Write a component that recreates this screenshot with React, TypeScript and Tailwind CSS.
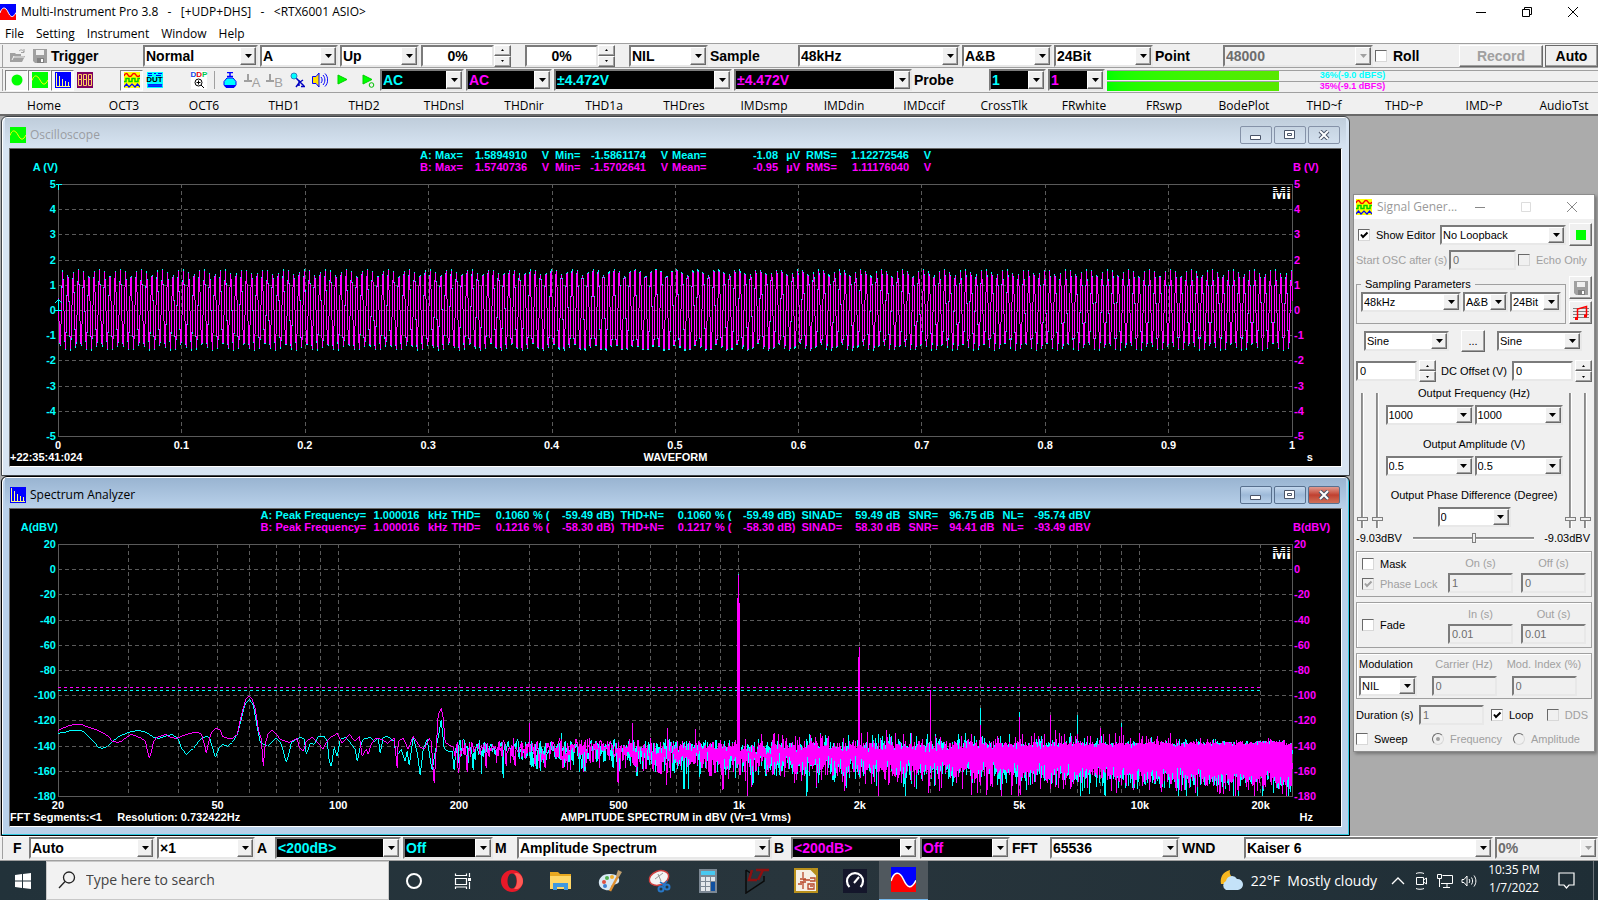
import type { ReactNode } from "react"
import clsx from "clsx"

const sans = "font-['Liberation_Sans',Arial,sans-serif]"
const segoe = "font-['Open_Sans','Noto_Sans',sans-serif]"
const raised =
  "border border-t-white border-l-white border-r-[#696969] border-b-[#696969] bg-[#f0f0f0] shadow-[inset_-1px_-1px_0_#a0a0a0]"
const sunken = "border-2 border-t-[#7b7b7b] border-l-[#7b7b7b] border-r-[#e8e8e8] border-b-[#e8e8e8]"

type Tone = "plain" | "cyan" | "magenta" | "disabled"

const toneClass: Record<Tone, string> = {
  plain: "bg-white text-black",
  cyan: "bg-black text-[#00ffff]",
  magenta: "bg-black text-[#ff00ff]",
  disabled: "bg-[#f0f0f0] text-[#6d6d6d]",
}

/* ---------- controls ---------- */

function Combo({
  label,
  value,
  className,
  tone = "plain",
  small = false,
}: {
  label: string
  value: string
  className?: string
  tone?: Tone
  small?: boolean
}) {
  return (
    <div className={clsx("flex", small ? "h-5" : "h-[22px]", sunken, toneClass[tone], className)}>
      <select
        aria-label={label}
        disabled={tone === "disabled"}
        className={clsx(
          "min-w-0 flex-1 appearance-none bg-transparent pl-px opacity-100 outline-none",
          small ? "text-[11px] leading-4" : "text-sm leading-[18px] font-bold"
        )}
      >
        <option>{value}</option>
      </select>
      <span className={clsx("pointer-events-none flex w-4 shrink-0 items-center justify-center", raised)}>
        <svg width="7" height="4" viewBox="0 0 7 4">
          <path d="M0 0H7L3.5 4Z" fill={tone === "disabled" ? "#a0a0a0" : "#000"} />
        </svg>
      </span>
    </div>
  )
}

function Spinner({ label }: { label: string }) {
  return (
    <div className="flex w-[17px] shrink-0 flex-col">
      <button aria-label={`${label} up`} className={clsx("flex h-[11px] items-center justify-center", raised)}>
        <svg width="3" height="2"><path d="M0 2H3L1.5 0Z" /></svg>
      </button>
      <button aria-label={`${label} down`} className={clsx("flex h-[11px] items-center justify-center", raised)}>
        <svg width="3" height="2"><path d="M0 0H3L1.5 2Z" /></svg>
      </button>
    </div>
  )
}

function Field({ label, value, disabled = false, className }: { label: string; value: string; disabled?: boolean; className?: string }) {
  return (
    <input
      aria-label={label}
      defaultValue={value}
      disabled={disabled}
      className={clsx(
        "h-5 min-w-0 pl-0.5 text-[11px] leading-4 outline-none",
        sunken,
        disabled ? "bg-[#f0f0f0] text-[#6d6d6d]" : "bg-white text-black",
        className
      )}
    />
  )
}

function Check({
  label,
  checked = false,
  disabled = false,
  type = "checkbox",
  className,
}: {
  label: string
  checked?: boolean
  disabled?: boolean
  type?: "checkbox" | "radio"
  className?: string
}) {
  return (
    <label className={clsx("flex items-center gap-1.5 whitespace-nowrap", disabled && "text-[#a0a0a0]", className)}>
      <span className="relative flex h-3 w-3 shrink-0">
        <input
          type={type}
          defaultChecked={checked}
          disabled={disabled}
          className={clsx(
            "h-3 w-3 appearance-none border border-t-[#696969] border-l-[#696969] border-r-[#d8d8d8] border-b-[#d8d8d8]",
            type === "radio" && "rounded-full",
            disabled ? "bg-[#f0f0f0]" : "bg-white"
          )}
        />
        {checked && (
          <svg className="pointer-events-none absolute inset-0" viewBox="0 0 12 12">
            {type === "radio" ? (
              <circle cx="6" cy="6" r="2" fill="#a0a0a0" />
            ) : (
              <path d="M3 5.5L5 8L9.5 3.5" fill="none" stroke={disabled ? "#a0a0a0" : "#000"} strokeWidth="2" />
            )}
          </svg>
        )}
      </span>
      {label}
    </label>
  )
}

/* ---------- 16px icons ---------- */

function Svg({ children, size = 16, className }: { children: ReactNode; size?: number; className?: string }) {
  return (
    <svg width={size} height={size} viewBox="0 0 16 16" className={clsx("shrink-0", className)} fill="none">
      {children}
    </svg>
  )
}

const AppIcon = ({ size = 16 }: { size?: number }) => (
  <Svg size={size}>
    <path d="M0 0H16V16H0Z" fill="#0000ff" />
    <path d="M0 9C2 2.500 5.500 2.500 8 8S13 14.500 16 8.500V16H0Z" fill="#ff0000" />
    <path d="M0 9C2 2.500 5.500 2.500 8 8S13 14.500 16 8.500" stroke="#fff" />
  </Svg>
)

const ScopeIcon = () => (
  <Svg>
    <path d="M0 0H16V16H0Z" fill="#00ff00" />
    <path d="M0 8.500C2 2.500 5 2.500 8 8S13 13.500 16 8" stroke="#ffff00" />
  </Svg>
)

const SpectrumIcon = () => (
  <Svg>
    <path d="M0 0H16V16H0Z" fill="#0000ff" />
    <path d="M1.500 1V14M4.500 4V14M7.500 7V14M10.500 9V14M13.500 10V14M1 14.500H15" stroke="#ffff80" />
  </Svg>
)

const DmmIcon = () => (
  <Svg>
    <path d="M0 0H16V16H0Z" fill="#800060" />
    <path
      d="M1.500 2.500H4.500V7.500H1.500ZM6.500 2.500H9.500V7.500H6.500ZM11.500 2.500H14.500V7.500H11.500ZM1.500 7.500H4.500V13.500H1.500ZM6.500 7.500H9.500V13.500H6.500ZM11.500 7.500H14.500V13.500H11.500Z"
      stroke="#ffd060"
    />
  </Svg>
)

const GeneratorIcon = () => (
  <Svg>
    <path d="M0 0H16V16H0Z" fill="#ffff00" />
    <path d="M0 4C1 1 3 1 4 3S7 5 8 3S11 1 12 3S15 5 16 3" stroke="#ff0000" strokeWidth="1.500" />
    <path d="M0 9.500H2V6.500H5V9.500H8V6.500H11V9.500H14V6.500H16" stroke="#00d000" strokeWidth="1.500" />
    <path d="M0 15L2.500 12L5 15L8 12L11 15L13.500 12L16 15" stroke="#0000ff" strokeWidth="1.200" />
  </Svg>
)

const DutIcon = () => (
  <span className="relative flex h-4 w-4 items-center justify-center bg-[#00ffff]">
    <svg className="absolute inset-0" width="16" height="16" fill="none" stroke="#0000ff">
      <path d="M1 1.500H5M7 1.500H9M11 1.500H15M1 3.500H5M9 3.500H14M1 12L3 15L5 12L7 15L9 12L11 15L13 12L15 15M1 15L3 12L5 15L7 12L9 15L11 12L13 15L15 12" />
    </svg>
    <span className="relative text-[8px] leading-none font-bold text-black">DUT</span>
  </span>
)

const DdpIcon = () => (
  <span className="flex h-[18px] w-4 flex-col items-center bg-white">
    <span className="text-[8px] leading-[7px] font-bold">
      <span className="text-blue-700">D</span>
      <span className="text-red-600">D</span>
      <span className="text-green-500">P</span>
    </span>
    <svg width="10" height="10" fill="none" stroke="#000">
      <circle cx="4.500" cy="4.500" r="3.500" />
      <path d="M2.500 4.500H6.500M4.500 2.500V6.500M7 7L10 10" />
    </svg>
  </span>
)

const FlaskIcon = () => (
  <Svg>
    <path d="M5 .5H11M8 1V4M5 4.500H11" stroke="#0000ff" strokeWidth="1.500" />
    <path d="M5 6H11L14 9.500V13L12 15.500H4L2 13V9.500Z" fill="#00ffff" stroke="#0000ff" />
    <path d="M3 14H13" stroke="#0000ff" strokeWidth="2" />
  </Svg>
)

const GroundIcon = ({ ch }: { ch: string }) => (
  <span className="flex items-center text-[#a0a0a0]">
    <svg width="8" height="12" stroke="currentColor" strokeWidth="2">
      <path d="M4 0V7M0 7H8" />
    </svg>
    <span className="pt-1 text-[13px] leading-none">{ch}</span>
  </span>
)

const MicIcon = () => (
  <Svg>
    <path d="M6 6L14 14M9 8V14M9 11L6 15M10 10L13 8" stroke="#0000c0" strokeWidth="1.500" />
    <circle cx="4" cy="4" r="3" fill="#00ffff" stroke="#3080c0" />
    <path d="M11 14.500H15" stroke="#0000c0" strokeWidth="1.500" />
  </Svg>
)

const SpeakerIcon = () => (
  <Svg>
    <path d="M.5 4.500H4L7 1V15L4 11.500H.5Z" fill="#ffe000" stroke="#0000ff" />
    <path d="M9 5C10.500 7 10.500 9 9 11M11 3C13.500 6 13.500 10 11 13M13 1.500C16.500 5 16.500 11 13 14.500" stroke="#0000ff" />
  </Svg>
)

const PlayIcon = ({ loop = false }: { loop?: boolean }) => (
  <Svg>
    <path d="M3 3L12 7.500L3 12Z" fill="#00ff00" stroke="#00d000" />
    {loop && <circle cx="11.500" cy="13" r="2.300" stroke="#00c000" />}
  </Svg>
)

const OpenIcon = () => (
  <Svg>
    <path d="M0 14V5H5L6 6H11V8H15L12 14Z" fill="#a0a0a0" />
    <path d="M3 9H14M2 12L4 8" stroke="#f0f0f0" />
    <path d="M9 3C11 1 13 2 14 4M14 1V4.500H11" stroke="#a0a0a0" />
  </Svg>
)

const SaveIcon = () => (
  <Svg>
    <path d="M1 1H15V15H3L1 13Z" fill="#a0a0a0" />
    <path d="M4 2H12V7H4Z" fill="#f0f0f0" />
    <path d="M5 10H12V15H5Z" fill="#808080" />
    <path d="M9 11H11V14H9Z" fill="#fff" />
  </Svg>
)

const MusicIcon = () => (
  <Svg>
    <path d="M0 3.500H16M0 6.500H16M0 9.500H16M0 12.500H16" stroke="#808080" />
    <path d="M4.500 13V4L13.500 1.500V11" stroke="#ff0000" strokeWidth="1.500" />
    <path d="M2 12H5V15H2ZM11 9.500H14V12.500H11Z" fill="#ff0000" />
  </Svg>
)

/* ---------- top bars ---------- */

function ToolLabel({ children, className }: { children: ReactNode; className?: string }) {
  return <span className={clsx("shrink-0 text-sm leading-5 font-bold whitespace-nowrap", className)}>{children}</span>
}

function ToolButton({ label, children, pressed = false, className }: { label: string; children: ReactNode; pressed?: boolean; className?: string }) {
  return (
    <button
      aria-label={label}
      className={clsx(
        "flex h-[21px] shrink-0 items-center justify-center",
        pressed && "border border-t-[#808080] border-l-[#808080] border-r-white border-b-white bg-[#f8f8f8]",
        className
      )}
    >
      {children}
    </button>
  )
}

const barClass = "flex items-center border-b border-[#a0a0a0] bg-[#f0f0f0]"
const Grip = () => <span className="mr-0.5 ml-0.5 h-[22px] w-px shrink-0 bg-[#a0a0a0]" />

function TitleBar() {
  return (
    <header className={clsx("bg-white text-xs", segoe)}>
      <div className="flex h-6 items-center">
        <AppIcon />
        <h1 className="ml-[5px] whitespace-pre">{"Multi-Instrument Pro 3.8   -   [+UDP+DHS]   -   <RTX6001 ASIO>"}</h1>
        <div className="mr-5 ml-auto flex gap-9">
          <button aria-label="Minimize"><svg width="10" height="10" stroke="#000"><path d="M0 5.500H10" /></svg></button>
          <button aria-label="Restore">
            <svg width="10" height="10" stroke="#000" fill="none"><path d="M.5 2.500H7.500V9.500H.5ZM2.500 2V.5H9.500V7.500H8" /></svg>
          </button>
          <button aria-label="Close"><svg width="10" height="10" stroke="#000"><path d="M0 0L10 10M10 0L0 10" /></svg></button>
        </div>
      </div>
      <nav className="flex h-[19px] items-center gap-3 pl-[5px] leading-4">
        {["File", "Setting", "Instrument", "Window", "Help"].map((item) => (
          <button key={item}>{item}</button>
        ))}
      </nav>
    </header>
  )
}

function TriggerBar() {
  return (
    <div className={clsx(barClass, "h-[25px] gap-0.5 border-t border-t-[#a0a0a0]")}>
      <Grip />
      <ToolButton label="Open" className="w-[22px]"><OpenIcon /></ToolButton>
      <ToolButton label="Save" className="w-[18px]"><SaveIcon /></ToolButton>
      <ToolLabel className="w-[90px]">Trigger</ToolLabel>
      <Combo label="Trigger mode" value="Normal" className="w-[115px]" />
      <Combo label="Trigger source" value="A" className="w-[78px]" />
      <Combo label="Trigger edge" value="Up" className="w-[79px]" />
      <div className="flex w-[90px]">
        <input aria-label="Trigger level" defaultValue="0%" className={clsx("h-[22px] min-w-0 flex-1 bg-white text-center text-sm font-bold", sunken)} />
        <Spinner label="Trigger level" />
      </div>
      <div className="ml-3 flex w-[90px]">
        <input aria-label="Trigger delay" defaultValue="0%" className={clsx("h-[22px] min-w-0 flex-1 bg-white text-center text-sm font-bold", sunken)} />
        <Spinner label="Trigger delay" />
      </div>
      <Combo label="Noise rejection" value="NIL" className="ml-3 w-[79px]" />
      <ToolLabel className="w-[86px]">Sample</ToolLabel>
      <Combo label="Sampling rate" value="48kHz" className="min-w-20 flex-1" />
      <Combo label="Channels" value="A&amp;B" className="w-[90px]" />
      <Combo label="Bit resolution" value="24Bit" className="w-[99px]" />
      <ToolLabel className="w-[66px]">Point</ToolLabel>
      <Combo label="Record length" value="48000" tone="disabled" className="w-[150px]" />
      <Check label="Roll" className="w-[82px] text-sm leading-5 font-bold" />
      <button disabled className={clsx("h-[22px] w-[84px] text-sm font-bold text-[#a0a0a0]", raised)}>Record</button>
      <button className={clsx("h-[22px] w-[53px] text-sm font-bold outline -outline-offset-1 outline-[#696969]", raised)}>Auto</button>
    </div>
  )
}

function LevelMeter({ label, text, value, className }: { label: string; text: string; value: number; className: string }) {
  return (
    <div
      role="meter"
      aria-label={label}
      aria-valuenow={value}
      className="relative flex h-[10px] items-center justify-center border-t border-[#a0a0a0]"
    >
      <div className="absolute inset-y-0 left-0 bg-linear-to-r from-[#00ff00] to-[#58e800]" style={{ width: `${value}%` }} />
      <span className={clsx("relative text-[9px] leading-[9px] font-bold", className)}>{text}</span>
    </div>
  )
}

function InstrumentBar() {
  return (
    <div className={clsx(barClass, "h-[25px]")}>
      <Grip />
      <ToolButton label="Run" pressed className="w-[23px]">
        <svg width="12" height="12"><circle cx="6" cy="6" r="5.500" fill="#00ff00" /></svg>
      </ToolButton>
      <ToolButton label="Oscilloscope" pressed className="w-[23px]"><ScopeIcon /></ToolButton>
      <ToolButton label="Spectrum analyzer" pressed className="w-[23px]"><SpectrumIcon /></ToolButton>
      <ToolButton label="Multimeter" className="w-[22px]"><DmmIcon /></ToolButton>
      <ToolButton label="Signal generator" pressed className="ml-6 w-[23px]"><GeneratorIcon /></ToolButton>
      <ToolButton label="Device test plan" className="w-[23px]"><DutIcon /></ToolButton>
      <ToolButton label="Derived data points" className="ml-[22px] w-[22px]"><DdpIcon /></ToolButton>
      <span className="mx-1 h-[18px] w-px bg-[#a0a0a0]" />
      <ToolButton label="Calibration" className="w-[22px]"><FlaskIcon /></ToolButton>
      <ToolButton label="Zero A" className="w-[22px]"><GroundIcon ch="A" /></ToolButton>
      <ToolButton label="Zero B" className="w-[23px]"><GroundIcon ch="B" /></ToolButton>
      <ToolButton label="Input device" className="w-[23px]"><MicIcon /></ToolButton>
      <ToolButton label="Output device" className="w-[22px]"><SpeakerIcon /></ToolButton>
      <ToolButton label="Play" className="w-6"><PlayIcon /></ToolButton>
      <ToolButton label="Play in loop" className="w-[25px]"><PlayIcon loop /></ToolButton>
      <div className="flex min-w-0 flex-1 items-center gap-0.5">
        <Combo label="Coupling A" value="AC" tone="cyan" className="w-[84px]" />
        <Combo label="Coupling B" value="AC" tone="magenta" className="w-[86px]" />
        <Combo label="Range A" value="±4.472V" tone="cyan" className="w-[178px]" />
        <Combo label="Range B" value="±4.472V" tone="magenta" className="w-[178px]" />
        <ToolLabel className="w-[73px]">Probe</ToolLabel>
        <Combo label="Probe A" value="1" tone="cyan" className="w-[57px]" />
        <Combo label="Probe B" value="1" tone="magenta" className="w-[57px]" />
        <div className="flex min-w-0 flex-1 flex-col gap-px">
          <LevelMeter label="Level A" text="36%(-9.0 dBFS)" value={35} className="text-[#00ffff]" />
          <LevelMeter label="Level B" text="35%(-9.1 dBFS)" value={35} className="text-[#ff00ff]" />
        </div>
      </div>
    </div>
  )
}

const hotKeys = [
  "Home", "OCT3", "OCT6", "THD1", "THD2", "THDnsl", "THDnir", "THD1a", "THDres", "IMDsmp",
  "IMDdin", "IMDccif", "CrossTlk", "FRwhite", "FRswp", "BodePlot", "THD~f", "THD~P", "IMD~P", "AudioTst",
]

function HotPanelBar() {
  return (
    <div className={clsx("flex h-[23px] overflow-hidden border-b-2 border-[#696969] bg-[#f0f0f0] pt-[5px] pl-1 text-xs", segoe)}>
      {hotKeys.map((key) => (
        <button key={key} className="w-20 shrink-0">{key}</button>
      ))}
    </div>
  )
}

/* ---------- charts ---------- */

const X0 = 48
const X1 = 1283
const Y0 = 11
const Y1 = 263
const CYAN = "#00ffff"
const MAGENTA = "#ff00ff"

function scopePath(amplitude: number) {
  let d = ""
  for (let x = 0; x <= X1 - X0; x++) {
    const v = amplitude * Math.cos((2 * Math.PI * (x - 4.2)) / 5.255)
    const y = Math.round(137 - v * 25.2)
    d += `${x ? "L" : "M"}${X0 + x + 0.5} ${y + 0.5}`
  }
  return d
}

const freqX = (f: number) => X0 + Math.log10(f / 20) * 401.2
const dbY = (db: number) => Y0 + ((20 - db) / 200) * (Y1 - Y0)

// low frequency part of both traces: x from the left axis, then level in dBV
const lowA = [
  0, -130, 6, -129, 13, -128, 23, -128, 28, -131, 35, -136, 40, -141, 44, -142, 49, -140, 54, -136, 61, -132, 70, -129, 80, -128,
  88, -129, 95, -133, 101, -134, 106, -132, 114, -131, 120, -135, 123, -142, 128, -147, 135, -142, 142, -135, 148, -132, 151, -133,
  154, -141, 157, -149, 161, -141, 164, -139, 169, -140, 174, -137, 179, -131, 183, -118, 187, -106, 191, -103, 195, -108, 198, -121,
  202, -137, 209, -140, 214, -136, 218, -134, 222, -137, 225, -144, 228, -153, 231, -145, 233, -137, 242, -133, 246, -135, 248, -147,
  252, -138, 256, -139, 260, -132, 266, -132, 269, -136, 271, -152, 273, -156, 276, -141, 279, -148, 282, -135, 287, -133, 291, -136,
  297, -143, 299, -152, 302, -140, 305, -135, 312, -133, 316, -136, 320, -134, 322, -146, 325, -133, 329, -132, 336, -136, 338, -149,
  343, -143, 347, -152, 349, -144, 351, -155, 355, -133, 359, -145, 362, -163, 365, -143, 369, -135, 372, -151, 374, -159, 377, -144,
  380, -133, 383, -120, 386, -142, 390, -144, 394, -144, 396, -159, 398, -140,
]
const lowB = [
  0, -128, 4, -126, 11, -124, 18, -123, 23, -123, 30, -125, 37, -127, 45, -130, 50, -132, 54, -136, 59, -137, 63, -136, 68, -133,
  73, -131, 78, -132, 83, -134, 87, -136, 89, -144, 91, -150, 93, -144, 95, -137, 98, -133, 102, -132, 107, -131, 112, -133, 118, -134,
  123, -132, 131, -130, 140, -129, 143, -131, 146, -139, 148, -146, 150, -138, 153, -129, 156, -127, 159, -126, 162, -128, 164, -132,
  169, -134, 174, -134, 179, -131, 182, -119, 186, -107, 188, -102, 191, -101, 194, -103, 197, -111, 200, -127, 203, -135, 205, -156,
  207, -138, 210, -130, 214, -128, 218, -131, 222, -135, 228, -136, 231, -137, 239, -134, 241, -141, 245, -144, 248, -136, 254, -133,
  260, -138, 265, -143, 267, -139, 271, -134, 279, -130, 284, -138, 291, -131, 297, -136, 301, -132, 304, -148, 308, -143, 310, -147,
  313, -139, 317, -134, 324, -135, 329, -138, 336, -134, 339, -158, 340, -136, 345, -134, 350, -143, 355, -132, 362, -141, 366, -143,
  371, -134, 373, -136, 376, -170, 378, -143, 380, -116, 383, -110, 385, -118, 387, -137, 390, -139, 395, -141, 397, -149, 399, -137,
]

type Peak = [freq: number, db: number]

const peaksA: Peak[] = [[360, -130], [1000, -3.7], [2000, -63], [3000, -97], [4000, -110], [5000, -113], [6000, -122], [7000, -116], [8000, -128], [9000, -122]]
const peaksB: Peak[] = [
  [300, -122], [540, -122], [660, -126], [780, -127], [1000, -4.4], [1140, -131], [1260, -131], [1620, -132], [2000, -62], [2090, -129],
  [2340, -128], [2460, -130], [2580, -131], [2700, -130], [3000, -96], [3100, -132], [3800, -131], [4000, -124], [5000, -117], [5600, -132],
  [5800, -131], [6000, -116], [6180, -128], [6500, -131], [7000, -131], [7400, -132], [8000, -126], [8700, -130], [9000, -125], [10000, -130], [10400, -132],
]

function spectrumPath(low: number[], peaks: Peak[], seed: number) {
  let d = ""
  for (let i = 0; i < low.length; i += 2) {
    d += `${i ? "L" : "M"}${X0 + low[i] + 0.5} ${Math.round(dbY(low[i + 1])) + 0.5}`
  }
  let state = seed
  const random = () => {
    state = (Math.imul(state, 1664525) + 1013904223) >>> 0
    return (state + 1) / 4294967297
  }
  const gauss = () => Math.sqrt(-2 * Math.log(random())) * Math.cos(2 * Math.PI * random())
  // noise for every FFT bin, smeared over its neighbours by the window, folded into pixel columns
  const columns = new Map<number, number[]>()
  const re = [0, 0, 0, 0, 0]
  const im = [0, 0, 0, 0, 0]
  const window = [0.3, 0.75, 1, 0.75, 0.3]
  for (let f = 199; f < 23950; f += 0.732422) {
    re.shift()
    im.shift()
    re.push(gauss())
    im.push(gauss())
    const a = re.reduce((sum, v, i) => sum + v * window[i], 0)
    const b = im.reduce((sum, v, i) => sum + v * window[i], 0)
    const x = Math.floor(freqX(f))
    const floor = f < 500 ? -141.5 : f < 1000 ? -143 : f < 20000 ? -145 : f < 23000 ? -144 : -146
    const level = floor + 10 * Math.log10((a * a + b * b) / 4.6 + 1e-5)
    const column = columns.get(x)
    if (column) column.push(level)
    else columns.set(x, [level])
  }
  // small spurs standing out of the noise floor
  columns.forEach((levels, x) => {
    const inSpurs = x > freqX(1100) && x < freqX(12000)
    if (random() < (inSpurs ? 0.3 : 0.15)) levels.push(-138 + (inSpurs ? 8 : 4) * random() ** 2)
  })
  for (const [freq, db] of peaks) {
    const x = Math.floor(freqX(freq))
    columns.get(x)?.push(db)
    if (db > -90) {
      columns.get(x - 1)?.push(db > -50 ? -23 : db - 8)
      if (db > -50) columns.get(x + 1)?.push(-27)
    }
  }
  columns.forEach((levels, x) => {
    const top = Math.round(dbY(Math.max(...levels)))
    const bottom = Math.min(Y1, Math.round(dbY(Math.min(...levels))))
    const first = Math.min(Y1, Math.round(dbY(levels[0])))
    d += `L${x + 0.5} ${first + 0.5}V${bottom + 0.5}V${top + 0.5}V${first + 0.5}`
  })
  return d
}

const scopeA = scopePath(1.62)
const scopeB = scopePath(1.57)
const spectrumA = spectrumPath(lowA, peaksA, 7)
const spectrumB = spectrumPath(lowB, peaksB, 4242)

const voltTicks = [5, 4, 3, 2, 1, 0, -1, -2, -3, -4, -5]
const dbTicks = [20, 0, -20, -40, -60, -80, -100, -120, -140, -160, -180]
const timeTicks = ["0", "0.1", "0.2", "0.3", "0.4", "0.5", "0.6", "0.7", "0.8", "0.9", "1"]
const freqGrid = [
  30, 40, 50, 60, 70, 80, 90, 100, 200, 300, 400, 500, 600, 700, 800, 900, 1000,
  2000, 3000, 4000, 5000, 6000, 7000, 8000, 9000, 10000, 20000,
]
const freqTicks: [number, string][] = [
  [20, "20"], [50, "50"], [100, "100"], [200, "200"], [500, "500"], [1000, "1k"], [2000, "2k"], [5000, "5k"], [10000, "10k"], [20000, "20k"],
]

function Plot({
  label,
  yTicks,
  xGrid,
  xTicks,
  children,
}: {
  label: string
  yTicks: number[]
  xGrid: number[]
  xTicks: [number, string][]
  children: ReactNode
}) {
  const rowY = (i: number) => Math.round(Y0 + (i * (Y1 - Y0)) / 10)
  return (
    <svg role="img" aria-label={label} viewBox="0 0 1332 278" className="block h-auto w-full text-[11px] font-bold">
      <g fill="none" stroke="#5a5a5a" shapeRendering="crispEdges">
        {yTicks.slice(1, -1).map((t, i) => (
          <path key={t} d={`M${X0} ${rowY(i + 1) + 0.5}H${X1}`} strokeDasharray="4 3" />
        ))}
        {xGrid.map((x) => (
          <path key={x} d={`M${Math.floor(x) + 0.5} ${Y0}V${Y1}`} strokeDasharray="4 3" />
        ))}
        <path d={`M${X0 + 0.5} ${Y0 + 0.5}H${X1 + 0.5}V${Y1 + 0.5}H${X0 + 0.5}Z`} />
      </g>
      <g fill="none" shapeRendering="crispEdges">{children}</g>
      {yTicks.map((t, i) => (
        <g key={t}>
          <text x={X0 - 2} y={rowY(i) + 4} textAnchor="end" fill={CYAN}>{t}</text>
          <text x={X1 + 2} y={rowY(i) + 4} fill={MAGENTA}>{t}</text>
        </g>
      ))}
      {xTicks.map(([x, text]) => (
        <text key={text} x={x} y={276} textAnchor="middle" fill="#fff">{text}</text>
      ))}
      <text x={1263} y={26} fill="#fff" className="text-[17px]">MI</text>
      <path d="M1262 15.500H1283M1262 17.500H1283M1262 19.500H1283" stroke="#000" />
    </svg>
  )
}

type Cell = [text: string, width: string, right?: boolean]

function Readout({ cells, className }: { cells: Cell[]; className: string }) {
  return (
    <div className={clsx("flex h-3 items-center whitespace-nowrap", className)}>
      {cells.map(([text, width, right], i) => (
        <span key={i} className={clsx("shrink-0", width, right && "text-right")}>{text}</span>
      ))}
    </div>
  )
}

function scopeCells(ch: string, max: string, min: string, mean: string, rms: string): Cell[] {
  return [
    [ch, "w-[15px]"], ["Max=", "w-[28px]"], [max, "w-16", true], ["V", "w-[22px]", true],
    ["Min=", "w-[32px] pl-1.5"], [min, "w-[65px]", true], ["V", "w-[22px]", true],
    ["Mean=", "w-[40px] pl-1"], [mean, "w-[70px]", true], ["µV", "w-[22px]", true],
    ["RMS=", "w-[40px] pl-1.5"], [rms, "w-[69px]", true], ["V", "w-[22px]", true],
  ]
}

function spectrumCells(ch: string, thd: string, db: string, thdn: string, snr: string, nl: string): Cell[] {
  return [
    [ch, "w-[15px]"], ["Peak Frequency=", "w-[90px]"], ["1.000016", "w-[54px]", true], ["kHz", "w-[28px]", true],
    ["THD=", "w-[36px] pl-1"], [thd, "w-[46px]", true], ["% (", "w-[20px]", true], [`-${db} dB)`, "w-[65px]", true],
    ["THD+N=", "w-[50px] pl-1.5"], [thdn, "w-[47px]", true], ["% (", "w-[20px]", true], [`-${db} dB)`, "w-[64px]", true],
    ["SINAD=", "w-[47px] pl-1.5"], [`${db} dB`, "w-[58px]", true],
    ["SNR=", "w-[36px] pl-2"], [`${snr} dB`, "w-[58px]", true],
    ["NL=", "w-[28px] pl-2"], [`${nl} dBV`, "w-[68px]", true],
  ]
}

function ChartWindow({
  title,
  icon,
  active = false,
  axisA,
  axisB,
  readouts,
  footLeft,
  footCenter,
  unit,
  children,
}: {
  title: string
  icon: ReactNode
  active?: boolean
  axisA: string
  axisB: string
  readouts: ReactNode
  footLeft: ReactNode
  footCenter: string
  unit: string
  children: ReactNode
}) {
  const box = clsx(
    "flex h-[18px] w-8 items-center justify-center rounded-xs border",
    active ? "border-[#58708e]" : "border-[#8592a8]"
  )
  const boxFill = active && "bg-linear-to-b from-[#c4d8ee] via-[#9db9d8] to-[#b9d1ea]"
  return (
    <section
      className={clsx(
        "rounded-t-md border px-[7px] pb-2",
        active
          ? "border-black bg-[#b9d1ea] shadow-[inset_-1px_-1px_0_#30c8e0,inset_1px_1px_0_#fff]"
          : "border-[#404448] bg-[#d7e4f2] shadow-[inset_1px_1px_0_#fff]"
      )}
    >
      <div
        className={clsx(
          "-mx-1 mt-px flex h-[30px] items-center pt-1 pr-1.5 pl-[5px] text-xs",
          segoe,
          active ? "bg-linear-to-b from-[#99b4d1] to-[#b9d1ea] text-black" : "bg-linear-to-b from-[#bfcddb] to-[#d7e4f2] text-[#9a9da2]"
        )}
      >
        {icon}
        <h2 className="ml-1">{title}</h2>
        <div className="ml-auto flex gap-0.5">
          <button aria-label={`Minimize ${title}`} className={clsx(box, boxFill)}>
            <svg width="12" height="12" fill="#fff" stroke="#4a5468"><path d="M.5 6.500H10.500V10.500H.5Z" /></svg>
          </button>
          <button aria-label={`Maximize ${title}`} className={clsx(box, boxFill)}>
            <svg width="12" height="10" fill="#fff" stroke="#4a5468"><path d="M.5 .5H10.500V8.500H.5ZM3.500 3.500H7.500V5.500H3.500Z" /></svg>
          </button>
          <button
            aria-label={`Close ${title}`}
            className={clsx(box, active && "bg-linear-to-b from-[#e09a90] via-[#c04030] to-[#d07058]")}
          >
            <svg width="12" height="10" fill="none">
              <path d="M2 1L10 9M10 1L2 9" stroke="#4a5468" strokeWidth="4" />
              <path d="M2 1L10 9M10 1L2 9" stroke="#fff" strokeWidth="2" />
            </svg>
          </button>
        </div>
      </div>
      <div className="border border-t-[#696969] border-l-[#696969] border-r-white border-b-white bg-black pb-[3px] text-[11px] leading-3 font-bold">
        <div className="flex items-end justify-between">
          <span className="w-12 text-right text-[#00ffff]">{axisA}</span>
          <div>{readouts}</div>
          <span className="w-12 text-[#ff00ff]">{axisB}</span>
        </div>
        {children}
        <div className="grid grid-cols-3 text-white">
          <span className="whitespace-pre">{footLeft}</span>
          <span className="text-center whitespace-nowrap">{footCenter}</span>
          <span className="pr-7 text-right">{unit}</span>
        </div>
      </div>
    </section>
  )
}

function OscilloscopeWindow() {
  const step = (X1 - X0) / 10
  return (
    <ChartWindow
      title="Oscilloscope"
      icon={<ScopeIcon />}
      axisA="A (V)"
      axisB="B (V)"
      readouts={
        <>
          <Readout cells={scopeCells("A:", "1.5894910", "-1.5861174", "-1.08", "1.12272546")} className="text-[#00ffff]" />
          <Readout cells={scopeCells("B:", "1.5740736", "-1.5702641", "-0.95", "1.11176040")} className="text-[#ff00ff]" />
        </>
      }
      footLeft="+22:35:41:024"
      footCenter="WAVEFORM"
      unit="s"
    >
      <Plot
        label="Waveform"
        yTicks={voltTicks}
        xGrid={timeTicks.slice(1, -1).map((_, i) => X0 + (i + 1) * step)}
        xTicks={timeTicks.map((t, i) => [X0 + i * step, t])}
      >
        <path d={scopeA} stroke={CYAN} />
        <path d={scopeB} stroke={MAGENTA} />
        <path d="M46 11.500H52M48.500 11V17M45 137.500H52M48.500 137V126M45.500 130L48.500 126L51.500 130" stroke={CYAN} />
      </Plot>
    </ChartWindow>
  )
}

function SpectrumWindow() {
  return (
    <ChartWindow
      title="Spectrum Analyzer"
      icon={<SpectrumIcon />}
      active
      axisA="A(dBV)"
      axisB="B(dBV)"
      readouts={
        <>
          <Readout cells={spectrumCells("A:", "0.1060", "59.49", "0.1060", "96.75", "-95.74")} className="text-[#00ffff]" />
          <Readout cells={spectrumCells("B:", "0.1216", "58.30", "0.1217", "94.41", "-93.49")} className="text-[#ff00ff]" />
        </>
      }
      footLeft={"FFT Segments:<1     Resolution: 0.732422Hz"}
      footCenter="AMPLITUDE SPECTRUM in dBV (Vr=1 Vrms)"
      unit="Hz"
    >
      <Plot
        label="Amplitude spectrum"
        yTicks={dbTicks}
        xGrid={freqGrid.map(freqX)}
        xTicks={freqTicks.map(([f, t]) => [freqX(f), t])}
      >
        <path d={`M${X0} ${Math.round(dbY(-93.49)) + 0.5}H${freqX(20000)}`} stroke={MAGENTA} strokeDasharray="3 3" />
        <path d={`M${X0} ${Math.round(dbY(-95.74)) + 0.5}H${freqX(20000)}`} stroke={CYAN} strokeDasharray="3 3" />
        <path d={spectrumA} stroke={CYAN} />
        <path d={spectrumB} stroke={MAGENTA} />
      </Plot>
    </ChartWindow>
  )
}

/* ---------- signal generator ---------- */

const groupClass = "border border-[#a0a0a0] shadow-[inset_1px_1px_0_#fff]"

function LevelSlider({ label }: { label: string }) {
  return (
    <input
      type="range"
      aria-label={label}
      defaultValue={5}
      className="h-[135px] w-[13px] appearance-none bg-transparent [direction:rtl] [writing-mode:vertical-lr] [background:linear-gradient(to_right,transparent_5px,#808080_5px,#a0a0a0_7px,#fff_7px,#fff_8px,transparent_8px)] [&::-webkit-slider-thumb]:h-1 [&::-webkit-slider-thumb]:w-[11px] [&::-webkit-slider-thumb]:appearance-none [&::-webkit-slider-thumb]:border [&::-webkit-slider-thumb]:border-[#808080] [&::-webkit-slider-thumb]:bg-[#f0f0f0]"
    />
  )
}

function PairGroup({ left, a, b, value, bValue }: { left: ReactNode; a: string; b: string; value: string; bValue: string }) {
  return (
    <div className={clsx("mt-[5px] flex h-[46px] items-center pr-[5px] pl-[5px]", groupClass)}>
      <div className="flex flex-1 flex-col gap-2">{left}</div>
      {[[a, value], [b, bValue]].map(([text, v]) => (
        <div key={text} className="ml-2 flex w-[65px] flex-col items-center text-[#a0a0a0]">
          <span className="pb-0.5">{text}</span>
          <Field label={text} value={v} disabled className="w-full" />
        </div>
      ))}
    </div>
  )
}

function SignalGenerator() {
  return (
    <section className="border border-[#8c8c8c] bg-[#f0f0f0] text-[11px] leading-4 shadow-[2px_2px_3px_#777]">
      <div className={clsx("flex h-6 items-center bg-white pl-0.5 text-xs text-[#999]", segoe)}>
        <GeneratorIcon />
        <h2 className="ml-[5px]">Signal Gener...</h2>
        <div className="mr-[17px] ml-auto flex gap-9">
          <button aria-label="Minimize generator"><svg width="10" height="10" stroke="#888"><path d="M0 5.500H10" /></svg></button>
          <button aria-label="Maximize generator"><svg width="10" height="10" stroke="#ddd" fill="none"><path d="M.5 .5H9.500V9.500H.5Z" /></svg></button>
          <button aria-label="Close generator"><svg width="10" height="10" stroke="#888"><path d="M0 0L10 10M10 0L0 10" /></svg></button>
        </div>
      </div>
      <div className="px-0.5 pb-1">
        <div className="mt-1 flex items-center gap-[3px] pl-0.5">
          <Check label="Show Editor" checked className="w-[79px]" />
          <Combo small label="Loopback" value="No Loopback" className="flex-1" />
          <button aria-label="Start" className={clsx("flex h-[23px] w-[23px] items-center justify-center", raised)}>
            <span className="h-2.5 w-2.5 bg-[#00ff00]" />
          </button>
        </div>
        <div className="mt-1 flex items-center gap-0.5 text-[#a0a0a0]">
          <span className="w-[91px] whitespace-nowrap">Start OSC after (s)</span>
          <Field label="Start OSC after (s)" value="0" disabled className="w-[67px]" />
          <Check label="Echo Only" disabled />
        </div>
        <div className="mt-1.5 flex gap-[3px]">
          <fieldset className="min-w-0 flex-1 border border-[#a0a0a0] px-1 pb-1">
            <legend className="px-1">Sampling Parameters</legend>
            <div className="flex gap-0.5">
              <Combo small label="Output sampling rate" value="48kHz" className="flex-1" />
              <Combo small label="Output channels" value="A&amp;B" className="w-[45px]" />
              <Combo small label="Output bits" value="24Bit" className="w-[51px]" />
            </div>
          </fieldset>
          <div className="flex flex-col gap-0.5">
            <button aria-label="Save signal" className={clsx("flex h-[23px] w-[23px] items-center justify-center", raised)}><SaveIcon /></button>
            <button aria-label="Music scale" className={clsx("flex h-[23px] w-[23px] items-center justify-center", raised)}><MusicIcon /></button>
          </div>
        </div>
        <div className="mt-1.5 flex items-center justify-between pr-2.5 pl-2">
          <Combo small label="Waveform A" value="Sine" className="w-[85px]" />
          <button aria-label="More" className={clsx("h-[22px] w-6", raised)}>...</button>
          <Combo small label="Waveform B" value="Sine" className="w-[85px]" />
        </div>
        <div className="mt-2 flex items-center justify-between">
          <div className="flex items-center gap-0.5"><Field label="DC offset A" value="0" className="w-[61px]" /><Spinner label="DC offset A" /></div>
          <span>DC Offset (V)</span>
          <div className="flex items-center gap-0.5"><Field label="DC offset B" value="0" className="w-[61px]" /><Spinner label="DC offset B" /></div>
        </div>
        <div className="mt-[3px] flex">
          <div className="flex gap-0.5 pt-2">
            <LevelSlider label="Level A coarse" />
            <LevelSlider label="Level A fine" />
          </div>
          <div className="flex flex-1 flex-col items-center">
            <span>Output Frequency (Hz)</span>
            <div className="mt-1 mb-[11px] flex gap-px">
              <Combo small label="Frequency A" value="1000" className="w-[88px]" />
              <Combo small label="Frequency B" value="1000" className="w-[88px]" />
            </div>
            <span>Output Amplitude (V)</span>
            <div className="mt-1 mb-[11px] flex gap-px">
              <Combo small label="Amplitude A" value="0.5" className="w-[88px]" />
              <Combo small label="Amplitude B" value="0.5" className="w-[88px]" />
            </div>
            <span>Output Phase Difference (Degree)</span>
            <Combo small label="Phase difference" value="0" className="mt-1 w-[73px]" />
          </div>
          <div className="flex gap-0.5 pt-2">
            <LevelSlider label="Level B coarse" />
            <LevelSlider label="Level B fine" />
          </div>
        </div>
        <div className="mt-0.5 flex items-center justify-between pr-0.5">
          <span>-9.03dBV</span>
          <input
            type="range"
            aria-label="Balance"
            defaultValue={51}
            className="h-3 w-[121px] appearance-none [background:linear-gradient(to_bottom,transparent_5px,#808080_5px,#a0a0a0_7px,#fff_7px,#fff_8px,transparent_8px)] [&::-webkit-slider-thumb]:h-2.5 [&::-webkit-slider-thumb]:w-1 [&::-webkit-slider-thumb]:appearance-none [&::-webkit-slider-thumb]:border [&::-webkit-slider-thumb]:border-[#808080] [&::-webkit-slider-thumb]:bg-[#f0f0f0]"
          />
          <span>-9.03dBV</span>
        </div>
        <PairGroup
          left={<><Check label="Mask" className="h-3" /><Check label="Phase Lock" checked disabled className="h-3" /></>}
          a="On (s)"
          b="Off (s)"
          value="1"
          bValue="0"
        />
        <PairGroup left={<Check label="Fade" />} a="In (s)" b="Out (s)" value="0.01" bValue="0.01" />
        <div className={clsx("mt-[5px] flex h-[46px] items-center pl-0.5", groupClass)}>
          <div className="flex w-[59px] flex-col pr-px">
            <span className="pb-1">Modulation</span>
            <Combo small label="Modulation" value="NIL" />
          </div>
          {["Carrier (Hz)", "Mod. Index (%)"].map((text) => (
            <div key={text} className="ml-3 flex w-[68px] flex-col items-center text-[#a0a0a0]">
              <span className="pb-1 whitespace-nowrap">{text}</span>
              <Field label={text} value="0" disabled className="w-[65px]" />
            </div>
          ))}
        </div>
        <div className="mt-1.5 flex items-center">
          <span className="w-[63px]">Duration (s)</span>
          <Field label="Duration (s)" value="1" disabled className="w-[65px]" />
          <Check label="Loop" checked className="ml-[7px]" />
          <Check label="DDS" disabled className="ml-auto pr-1" />
        </div>
        <div className="mt-1.5 flex items-center">
          <Check label="Sweep" className="w-[76px]" />
          <Check label="Frequency" type="radio" checked disabled className="w-[81px]" />
          <Check label="Amplitude" type="radio" disabled />
        </div>
      </div>
    </section>
  )
}

/* ---------- bottom bars ---------- */

function AnalyzerBar() {
  return (
    <div className={clsx(barClass, "h-[25px] gap-0.5 border-t border-t-white")}>
      <Grip />
      <ToolLabel className="w-5 pl-1.5">F</ToolLabel>
      <Combo label="Frequency range" value="Auto" className="w-[126px]" />
      <Combo label="Zoom" value="×1" className="w-[98px]" />
      <ToolLabel className="w-4">A</ToolLabel>
      <Combo label="Amplitude range A" value="&lt;200dB&gt;" tone="cyan" className="w-[126px]" />
      <Combo label="Averaging A" value="Off" tone="cyan" className="w-[90px]" />
      <ToolLabel className="w-5">M</ToolLabel>
      <Combo label="Mode" value="Amplitude Spectrum" className="min-w-20 flex-1" />
      <ToolLabel className="w-[15px]">B</ToolLabel>
      <Combo label="Amplitude range B" value="&lt;200dB&gt;" tone="magenta" className="w-[127px]" />
      <Combo label="Averaging B" value="Off" tone="magenta" className="w-[90px]" />
      <ToolLabel className="w-9">FFT</ToolLabel>
      <Combo label="FFT size" value="65536" className="w-[130px]" />
      <ToolLabel className="w-[60px]">WND</ToolLabel>
      <Combo label="Window function" value="Kaiser 6" className="w-[249px]" />
      <Combo label="Overlap" value="0%" tone="disabled" className="w-[103px]" />
    </div>
  )
}

const taskIcons: { name: string; icon: ReactNode }[] = [
  {
    name: "Cortana",
    icon: <svg width="18" height="18" fill="none" stroke="#fff" strokeWidth="2"><circle cx="9" cy="9" r="7" /></svg>,
  },
  {
    name: "Task View",
    icon: (
      <svg width="18" height="16" fill="none" stroke="#fff">
        <path d="M1.500 .5V2.500H12.500V.5M1.500 5.500H12.500V11.500H1.500ZM1.500 16V14H12.500V16M15.500 0V4M15.500 9V16" strokeWidth="1.200" />
        <path d="M14 5H17V8H14Z" fill="#fff" stroke="none" />
      </svg>
    ),
  },
  {
    name: "Opera",
    icon: (
      <svg width="24" height="24" viewBox="0 0 24 24">
        <path fillRule="evenodd" fill="#e81828" d="M12 1A11 11 0 1 0 12 23A11 11 0 1 0 12 1ZM12 4.500C15 4.500 16.500 8 16.500 12S15 19.500 12 19.500S7.500 16 7.500 12S9 4.500 12 4.500Z" />
        <path fill="#ff5a55" d="M14 4.800C18 6 18 18 14 19.200C17 22 23 18 23 12S17 2 14 4.800Z" />
      </svg>
    ),
  },
  {
    name: "File Explorer",
    icon: (
      <svg width="24" height="24" viewBox="0 0 24 24">
        <path d="M1 3H9L11 5H22V20H1Z" fill="#e8a820" />
        <path d="M1 7H22V20H1Z" fill="#ffd768" />
        <path d="M4 21V14H19V21H15V18H8V21Z" fill="#3f98e0" />
      </svg>
    ),
  },
  {
    name: "Paint",
    icon: (
      <svg width="24" height="24" viewBox="0 0 24 24">
        <path d="M11 5C4 5 0 10 1 15S8 22 12 21S11 17 15 16S22 14 21 10S16 5 11 5Z" fill="#d8e8f4" />
        <circle cx="6" cy="13" r="2" fill="#e05040" />
        <circle cx="9" cy="9" r="2" fill="#50b050" />
        <circle cx="14" cy="8" r="2" fill="#f0b030" />
        <circle cx="7" cy="17" r="2" fill="#4080d0" />
        <path d="M12 22L20 7" stroke="#e09030" strokeWidth="2.500" />
        <path d="M18 7L20 1L24 3L21 8Z" fill="#c0a070" />
      </svg>
    ),
  },
  {
    name: "Snipping Tool",
    icon: (
      <svg width="24" height="24" viewBox="0 0 24 24" fill="none">
        <ellipse cx="12" cy="9" rx="10" ry="7" fill="#f4f4f4" stroke="#d04040" strokeWidth="1.500" transform="rotate(-20 12 9)" />
        <path d="M8 10L16 4M11 5L14 12" stroke="#999" />
        <circle cx="14" cy="20" r="2.500" stroke="#2878c8" strokeWidth="2" />
        <circle cx="20" cy="18" r="2.500" stroke="#2878c8" strokeWidth="2" />
        <path d="M15 18L20 12M18 16L13 13" stroke="#2878c8" strokeWidth="1.500" />
      </svg>
    ),
  },
  {
    name: "Calculator",
    icon: (
      <svg width="20" height="24" viewBox="0 0 20 24">
        <path d="M1 0H19V24H1Z" fill="#7c8894" />
        <path d="M3 2H17V6H3Z" fill="#48c8f0" />
        <path d="M3 8H7V12H3ZM8 8H12V12H8ZM13 8H17V12H13ZM3 13H7V17H3ZM8 13H12V17H8ZM3 18H7V22H3ZM8 18H12V22H8Z" fill="#e4e8ec" />
        <path d="M13 13H17V22H13Z" fill="#1050a0" />
      </svg>
    ),
  },
  {
    name: "LTspice",
    icon: (
      <svg width="26" height="26" viewBox="0 0 26 26" fill="none">
        <path d="M2 2V25L20 13V8M2 2L8 6" stroke="#0a0a0a" strokeWidth="1.500" />
        <path d="M8 2L5 12H13M12 2H25M19 2L14 12" stroke="#8c1010" strokeWidth="2.500" />
      </svg>
    ),
  },
  {
    name: "Circuit Editor",
    icon: (
      <svg width="24" height="25" viewBox="0 0 24 25" fill="none">
        <path d="M1 1H17L23 7V24H1Z" fill="#f6efe4" stroke="#b8901c" strokeWidth="2" />
        <path d="M17 0H24V8Z" fill="#b8901c" />
        <path d="M9 4V10M6 11H12M6 14H12M9 14V21M9 12H16M16 10H21V13H16M4 16H8M14 16H20V21H14ZM16 18H19" stroke="#b84828" strokeWidth="1.300" />
      </svg>
    ),
  },
  {
    name: "Speedtest",
    icon: (
      <svg width="24" height="24" viewBox="0 0 24 24" fill="none">
        <path d="M0 0H24V24H0Z" fill="#14162b" />
        <path d="M6.500 18A8 8 0 1 1 17.500 18" stroke="#fff" strokeWidth="2.200" />
        <path d="M11 14L16 8" stroke="#fff" strokeWidth="2" />
      </svg>
    ),
  },
  { name: "Multi-Instrument", icon: <AppIcon size={25} /> },
]

function Taskbar() {
  return (
    <footer className={clsx("flex h-10 items-center bg-linear-to-r from-[#22323a] via-[#28353c] to-[#1f2e36] text-white", segoe)}>
      <button aria-label="Start menu" className="flex h-full w-[46px] shrink-0 items-center justify-center">
        <svg width="16" height="16" fill="#fff"><path d="M0 2L7 1V7.500H0ZM8 1L16 0V7.500H8ZM0 8.500H7V15L0 14ZM8 8.500H16V16L8 15Z" /></svg>
      </button>
      <div className="flex h-[39px] w-[343px] shrink-0 items-center gap-2.5 self-start border border-[#c8c8c8] bg-[#f2f2f2] pl-[11px]">
        <svg width="18" height="18" fill="none" stroke="#222" strokeWidth="1.300"><circle cx="11" cy="6.500" r="5.500" /><path d="M7 10.500L1 17" /></svg>
        <input aria-label="Search" placeholder="Type here to search" className="min-w-0 flex-1 bg-transparent text-sm outline-none placeholder:text-[#444]" />
      </div>
      <nav className="flex h-full">
        {taskIcons.map(({ name, icon }, i) => (
          <button
            key={name}
            aria-label={name}
            className={clsx(
              "flex h-full w-[49px] items-center justify-center",
              i === taskIcons.length - 1 && "border-b-2 border-[#76b9ed] bg-[#50585e]"
            )}
          >
            {icon}
          </button>
        ))}
      </nav>
      <div className="ml-auto flex h-full items-center">
        <svg width="24" height="22" viewBox="0 0 24 22">
          <path d="M10 0C2 2 0 8 1 14H12L16 8C11 8 9 4 10 0Z" fill="#f8b820" />
          <path d="M6 20A5 5 0 0 1 6 11A6 6 0 0 1 17 9A5 5 0 0 1 18 20Z" fill="#c4e2f8" />
        </svg>
        <span className="ml-[7px] text-sm whitespace-pre">{"22°F  Mostly cloudy"}</span>
        <div className="ml-3.5 flex items-center gap-2">
          <button aria-label="Show hidden icons"><svg width="14" height="8" fill="none" stroke="#fff" strokeWidth="1.300"><path d="M1 7L7 1L13 7" /></svg></button>
          <svg width="16" height="18" fill="none" stroke="#fff"><path d="M3 1.500C5 .5 9 .5 11 1.500M3 16.500C5 17.500 9 17.500 11 16.500M3.500 5.500H10.500V12.500H3.500ZM10.500 8L13.500 6V12L10.500 10" /></svg>
          <svg width="16" height="16" fill="none" stroke="#fff"><path d="M5.500 2.500H15.500V10.500H4M10 11V14M6 14.500H13M.5 1.500H4.500V5.500H.5ZM2.500 6V14" /></svg>
          <svg width="17" height="16" fill="none" stroke="#fff"><path d="M1 6.500H3L6 3V13L3 9.500H1ZM8 6C9 7.500 9 8.500 8 10M10.500 4.500C12 7 12 9 10.500 11.500M13 2.500C15.500 6 15.500 10 13 13.500" /></svg>
        </div>
        <div className="w-[72px] pb-1 text-center text-xs leading-[18px]">
          <div>10:35 PM</div>
          <div>1/7/2022</div>
        </div>
        <button aria-label="Notifications" className="mr-[18px] ml-2">
          <svg width="17" height="18" fill="none" stroke="#fff" strokeWidth="1.200"><path d="M1 1H16V13H11L8.500 16L6 13H1Z" /></svg>
        </button>
        <span className="mr-1 h-full w-px bg-[#6a7278]" />
      </div>
    </footer>
  )
}

export default function App() {
  return (
    <div className={clsx("flex min-h-screen flex-col bg-[#f0f0f0] text-black", sans)}>
      <TitleBar />
      <TriggerBar />
      <InstrumentBar />
      <HotPanelBar />
      <main className="flex flex-1 items-start bg-[#ababab] pl-px">
        <div className="min-w-0 flex-1">
          <OscilloscopeWindow />
          <SpectrumWindow />
        </div>
        <aside className="mt-[78px] w-[248px] shrink-0 px-[3px]">
          <SignalGenerator />
        </aside>
      </main>
      <AnalyzerBar />
      <Taskbar />
    </div>
  )
}
